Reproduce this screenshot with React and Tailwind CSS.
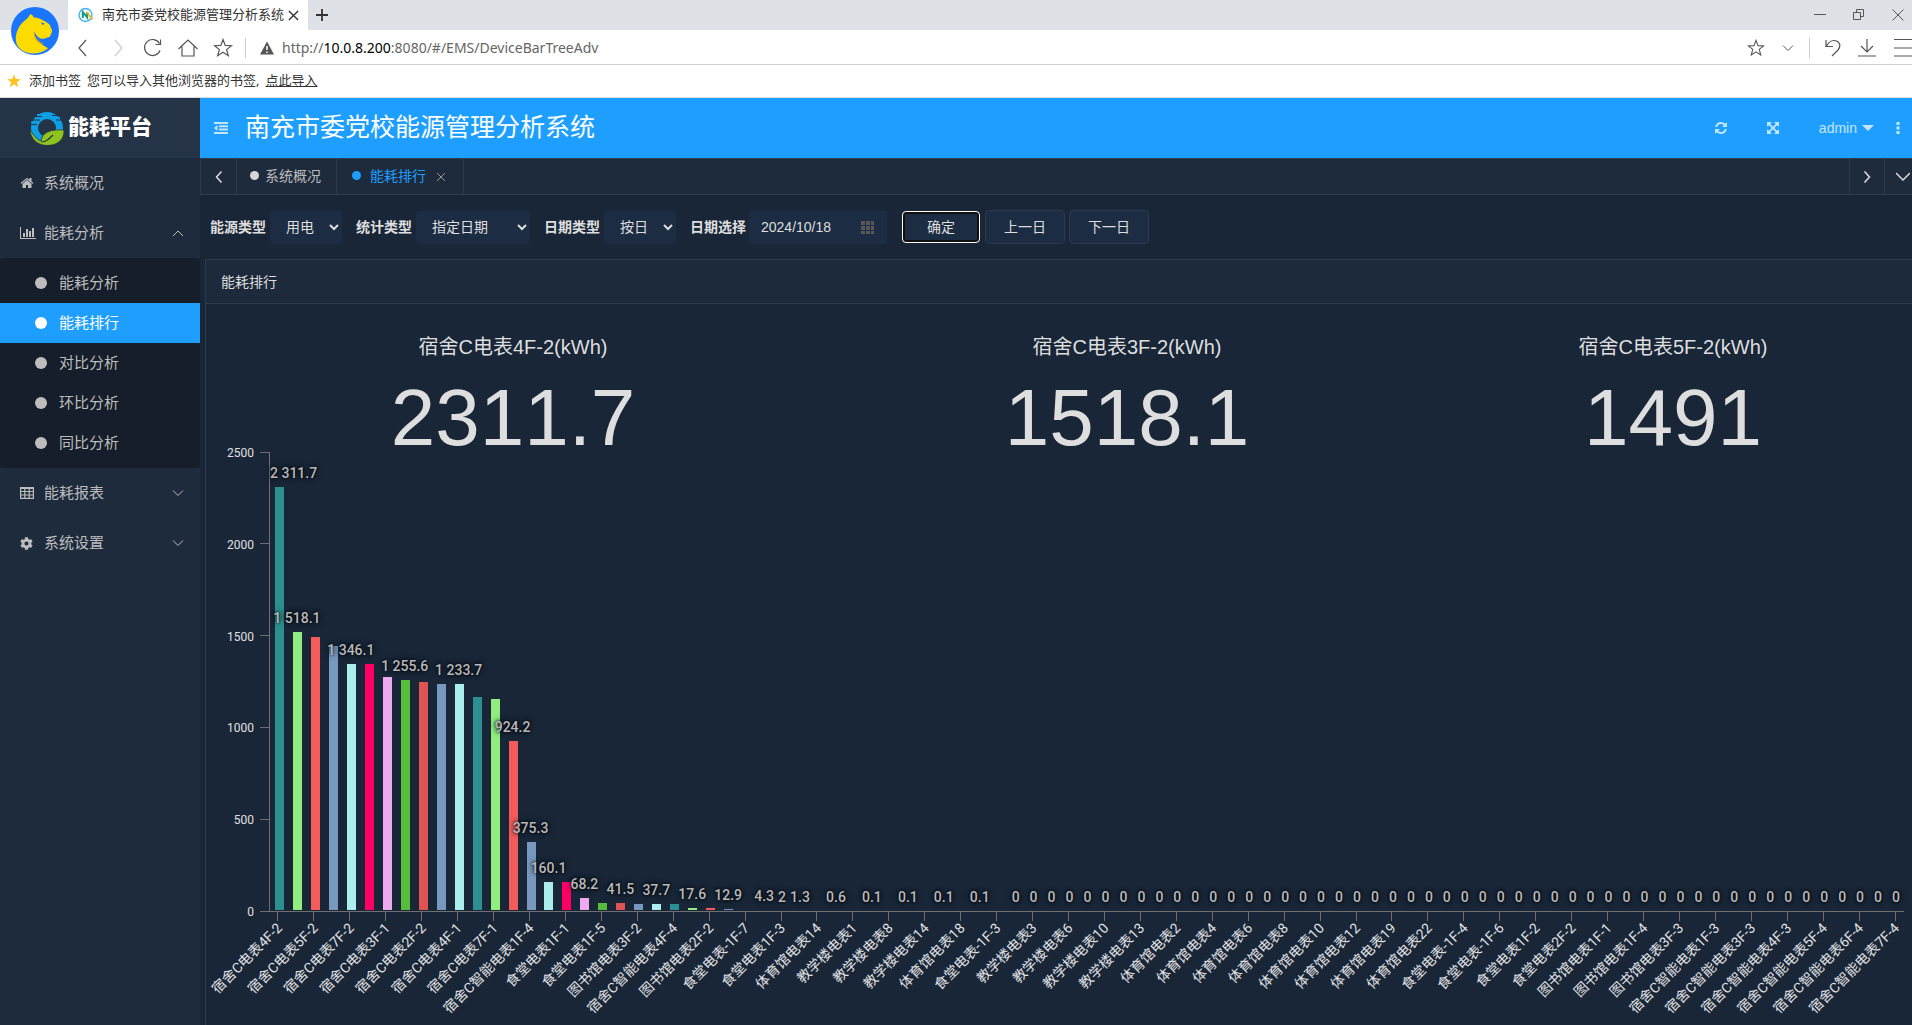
import { useState } from 'react'
import { FaCog } from 'react-icons/fa'

const COLORS = ['#2b908f', '#90ee7e', '#f45b5b', '#7798bf', '#aaeeee', '#ff0066', '#eeaaee', '#55bf3b', '#df5353', '#7798bf', '#aaeeee']

const VALUES = [
  2311.7, 1518.1, 1491, 1446, 1346.1, 1343, 1272, 1255.6, 1245, 1235, 1233.7, 1168, 1157, 924.2, 375.3, 160.1, 158, 68.2,
  42, 41.5, 40, 37.7, 36, 17.6, 15, 12.9, 5, 4.3, 2, 1.3, 1, 0.6, 0.1, 0.1, 0.1, 0.1, 0.1, 0.1, 0.1, 0.1, 0,
]
while (VALUES.length < 91) VALUES.push(0)

const LABELLED = [0, 1, 4, 7, 10, 13, 14, 15, 17, 19, 21, 23, 25, 27, 28, 29, 31, 33, 35, 37, 39]

const METERS = [
  '宿舍C电表4F-2', '宿舍C电表5F-2', '宿舍C电表7F-2', '宿舍C电表3F-1', '宿舍C电表2F-2', '宿舍C电表4F-1', '宿舍C电表7F-1',
  '宿舍C智能电表1F-4', '食堂电表1F-1', '食堂电表1F-5', '图书馆电表3F-2', '宿舍C智能电表4F-4', '图书馆电表2F-2', '食堂电表-1F-7',
  '食堂电表1F-3', '体育馆电表14', '教学楼电表1', '教学楼电表8', '教学楼电表14', '体育馆电表18', '食堂电表-1F-3', '教学楼电表3',
  '教学楼电表6', '教学楼电表10', '教学楼电表13', '体育馆电表2', '体育馆电表4', '体育馆电表6', '体育馆电表8', '体育馆电表10',
  '体育馆电表12', '体育馆电表19', '体育馆电表22', '食堂电表-1F-4', '食堂电表-1F-6', '食堂电表1F-2', '食堂电表2F-2',
  '图书馆电表1F-1', '图书馆电表1F-4', '图书馆电表3F-3', '宿舍C智能电表1F-3', '宿舍C智能电表3F-3', '宿舍C智能电表4F-3',
  '宿舍C智能电表5F-4', '宿舍C智能电表6F-4', '宿舍C智能电表7F-4',
]

const TOP_METERS = [
  { name: '宿舍C电表4F-2(kWh)', value: '2311.7' },
  { name: '宿舍C电表3F-2(kWh)', value: '1518.1' },
  { name: '宿舍C电表5F-2(kWh)', value: '1491' },
]

const ICONS = {
  home: 'M1472 992v480q0 26-19 45t-45 19h-384v-384h-256v384h-384q-26 0-45-19t-19-45v-480q0-1 .5-3t.5-3l575-474 575 474q1 2 1 6zm223-69l-62 74q-8 9-21 11h-3q-13 0-21-7l-692-577-692 577q-12 8-24 7-13-2-21-11l-62-74q-8-10-7-23.500t11-21.500l719-599q32-26 76-26t76 26l244 204v-195q0-14 9-23t23-9h192q14 0 23 9t9 23v408l219 182q10 8 11 21.500t-7 23.500z',
  refresh: 'M1639 1056q0 5-1 7-64 268-268 434.500t-478 166.500q-146 0-282.500-55t-243.500-157l-129 129q-19 19-45 19t-45-19-19-45v-448q0-26 19-45t45-19h448q26 0 45 19t19 45-19 45l-137 137q71 66 161 102t187 36q134 0 250-65t186-179q11-17 53-117 8-23 30-23h192q13 0 22.500 9.500t9.500 22.500zm25-800v448q0 26-19 45t-45 19h-448q-26 0-45-19t-19-45 19-45l138-138q-148-137-349-137-134 0-250 65t-186 179q-11 17-53 117-8 23-30 23h-199q-13 0-22.500-9.500t-9.500-22.500v-7q65-268 270-434.500t480-166.500q146 0 284 55.500t245 156.500l130-129q19-19 45-19t45 19 19 45z',
  expand: 'M1411 541l-355 355 355 355 144-144q29-31 70-14 39 17 39 59v448q0 26-19 45t-45 19h-448q-42 0-59-40-17-39 14-69l144-144-355-355-355 355 144 144q31 30 14 69-17 40-59 40h-448q-26 0-45-19t-19-45v-448q0-42 40-59 39-17 69 14l144 144 355-355-355-355-144 144q-19 19-45 19-12 0-24-5-40-17-40-59v-448q0-26 19-45t45-19h448q42 0 59 40 17 39-14 69l-144 144 355 355 355-355-144-144q-31-30-14-69 17-40 59-40h448q26 0 45 19t19 45v448q0 42-39 59-13 5-25 5-26 0-45-19z',
}

function Solid({ name, className }) {
  return <svg viewBox="0 0 1792 1792" className={className} fill="currentColor"><path d={ICONS[name]} /></svg>
}

function Line({ d, className, box = 20, width = 1.2 }) {
  return (
    <svg viewBox={`0 0 ${box} ${box}`} className={className} fill="none" stroke="currentColor" strokeWidth={width}>
      <path d={d} />
    </svg>
  )
}

const STAR = 'M10 1.500l2.200 5.900 6.300.3-4.900 3.900 1.700 6.100L10 14.200l-5.300 3.500 1.700-6.100L1.500 7.700l6.300-.3z'

function BrowserChrome() {
  return (
    <div className="relative font-['Noto_Sans','Noto_Sans_CJK_SC',sans-serif] text-[#333]">
      <svg viewBox="0 0 48 48" className="absolute left-[11px] top-[7px] z-10 h-12 w-12">
        <circle cx="24" cy="24" r="24" fill="#1a75ff" />
        <path fill="#ffdc00" d="M19.500 7c2 .8 2.600 2 3.400 3.600 4 .2 6.500 1.200 9.800 3.200 2.600 1.400 4.800 2.700 6.400 4.500-.2 1.400 1.700 3.400 1.900 5.200.2 1.800-.8 2.700-1.200 4.200-.5 1.800-1.800 2.900-3.900 2.700-1.300 1-3.600 1.800-5.800 1.300-3-.7-5.200-3.800-7.200-7.400.5 5.500 3 9.500 6.500 12.200 2.600 1.800 5.200 3.400 7.700 4.700C32 45.500 24 47.500 17.500 46 10 44 6 40 5 34c-.7-6 .8-10 4-15.500 2.600-3.700 6-5.500 8.200-8 .6-1.300 1.500-2.200 2.300-3.500z" />
        <path fill="#1a75ff" d="M29.500 15.500l4 .8-1.400 2z" />
        <path fill="#e5a900" d="M22.900 24.300c-.8 5 1 9.300 5.100 11.600 1.500.9 3.500 1 5 .8-5-1.200-9-5.400-10.100-12.400z" />
      </svg>
      <div className="flex h-[30px] items-center bg-[#dee1e6] pl-[68px]">
        <div className="flex h-full w-60 items-center bg-white pl-[10px] pr-[9px]">
          <svg viewBox="0 0 16 16" className="mr-2 h-4 w-4 shrink-0">
            <circle cx="7.500" cy="8" r="6.500" fill="none" stroke="#3fb4f0" strokeWidth="1.400" />
            <path d="M4.800 11V5l4.400 5.500V5" fill="none" stroke="#0c9b86" strokeWidth="2" />
            <path d="M9 5l5.500 7.500" stroke="#f5b921" strokeWidth="2" />
          </svg>
          <span className="flex-1 whitespace-nowrap text-[13px]">南充市委党校能源管理分析系统</span>
          <button aria-label="关闭标签页"><Line d="M1 1l10 10M11 1L1 11" box={12} width={1.5} className="h-[11px] w-[11px]" /></button>
        </div>
        <button aria-label="新标签页" className="ml-2"><Line d="M6 0v12M0 6h12" box={12} width={1.8} className="h-3 w-3" /></button>
        <div className="ml-auto flex items-center gap-[27px] pr-2 text-[#555]">
          <button aria-label="最小化"><Line d="M0 5.500h12" box={12} width={1} className="h-3 w-3" /></button>
          <button aria-label="还原"><Line d="M.500 3.500h7v7h-7zM3.500 3V.500h7v7H8" box={12} width={1} className="h-3 w-3" /></button>
          <button aria-label="关闭"><Line d="M.500.500l11 11M11.500.500l-11 11" box={12} width={1} className="h-3 w-3" /></button>
        </div>
      </div>
      <div className="flex h-[35px] items-center overflow-hidden border-b border-[#d0d0d0] bg-white pl-[73px] pt-px text-[#555]">
        <div className="flex items-center gap-[15px]">
          <button aria-label="后退"><Line d="M13 2L6 10l7 8" className="h-5 w-5" /></button>
          <button aria-label="前进" className="text-[#ccc]"><Line d="M7 2l7 8-7 8" className="h-5 w-5" /></button>
          <button aria-label="刷新"><Line d="M17 12.500A8 8 0 1 1 16.500 5.500M17.500 1.500v5h-5" className="h-5 w-5" /></button>
          <button aria-label="主页"><Line d="M.500 11L10 2l9.500 9M4 8.500V18h12V8.500" className="h-5 w-5" /></button>
          <button aria-label="收藏"><Line d={STAR} className="h-5 w-5" /></button>
        </div>
        <div className="ml-3 h-5 w-px bg-[#ccc]" />
        <svg viewBox="0 0 14 14" className="ml-[14px] h-[14px] w-[14px]">
          <path d="M7 .500L14 13.500H0z" fill="#555" />
          <path d="M7 5v4M7 10.500v1.500" stroke="#fff" strokeWidth="1.500" />
        </svg>
        <span className="ml-2 text-sm text-[#666]">http://<span className="text-black">10.0.8.200</span>:8080/#/EMS/DeviceBarTreeAdv</span>
        <div className="ml-auto flex items-center">
          <button aria-label="加入书签"><Line d={STAR} className="h-[18px] w-[18px]" /></button>
          <button aria-label="书签列表" className="ml-[17px]"><Line d="M1 3.500l5 5 5-5" box={12} width={1} className="h-3 w-3" /></button>
          <div className="ml-[15px] h-5 w-px bg-[#ccc]" />
          <button aria-label="撤销" className="ml-[14px]"><Line d="M2 2v6.500h7M2.500 8C5 3.500 9 1.500 12.500 3c4.500 2 4 6 1.500 9l-6 6" className="h-5 w-5" /></button>
          <button aria-label="下载" className="ml-[13px]"><Line d="M10 1v13M4 8l6 6 6-6M1 18h18" className="h-5 w-5" /></button>
          <button aria-label="菜单" className="-mr-[2px] ml-[17px]"><Line d="M0 1.500h20M0 10h20M0 18h20" className="h-5 w-5" /></button>
        </div>
      </div>
      <div className="flex h-[33px] items-center border-b border-[#d8dadd] bg-white pl-[6px] text-[13px]">
        <svg viewBox="0 0 20 20" className="mr-[7px] h-4 w-4"><path d={STAR} fill="#ffc21f" /></svg>
        <span>添加书签</span>
        <span className="ml-[6px]">您可以导入其他浏览器的书签,</span>
        <a href="#import" className="ml-[6px] underline">点此导入</a>
      </div>
    </div>
  )
}

function Logo() {
  return (
    <div className="flex h-15 items-center bg-[#243346] pl-[30px]">
      <svg viewBox="0 0 34 34" className="h-[34px] w-[34px]">
        <circle cx="17" cy="17" r="12.500" fill="none" stroke="#0d9fe3" strokeWidth="7" />
        <path fill="none" stroke="#243346" strokeWidth="1" d="M4 5.500h8M22 4.500h7M2 9h8M26 9h6M0 13.500h7" />
        <path fill="#0d9fe3" d="M7 3h4v2H7zM1 10.500h6v2H1zM25 6h5v2h-5z" />
        <path fill="#8fc31f" stroke="#243346" strokeWidth=".800" d="M0 18c3 6 6 10 11 12 1-8 8-12 23-11 .500 9-6 15.500-17 15.500C8 34.500 0 28 0 18z" />
        <path fill="none" stroke="#243346" strokeWidth="1.200" d="M11 31c5 0 8-3 12-7" />
      </svg>
      <span className="whitespace-nowrap pl-1 font-['Liberation_Serif','Noto_Sans_CJK_SC',serif] text-[21px] font-black text-white">能耗平台</span>
    </div>
  )
}

function NavItem({ icon, open, leaf, children }) {
  return (
    <button className="flex h-[50px] w-full items-center pl-5 pr-4 text-left text-[15px]">
      <span className="w-6">{icon}</span>
      <span className="flex-1">{children}</span>
      {!leaf && <Line d={open ? 'M1 9l5-5 5 5' : 'M1 3.500l5 5 5-5'} box={12} width={1} className="h-3 w-3" />}
    </button>
  )
}

function Sidebar() {
  const [active, setActive] = useState('能耗排行')
  return (
    <aside className="w-[200px] shrink-0 bg-[#1d2b3d] text-[#bdbdbd]">
      <Logo />
      <nav>
        <NavItem leaf icon={<Solid name="home" className="h-[14px] w-[14px]" />}>系统概况</NavItem>
        <NavItem
          open
          icon={
            <svg viewBox="0 0 2048 1792" className="h-[14px] w-4" fill="currentColor">
              <path d="M640 896v512h-256v-512h256zm384-512v1024h-256v-1024h256zm1024 1152v128h-2048v-1536h128v1408h1920zm-640-896v768h-256v-768h256zm384-384v1152h-256v-1152h256z" />
            </svg>
          }
        >
          能耗分析
        </NavItem>
        <div className="rounded bg-[#151e2a] py-[5px]">
          {['能耗分析', '能耗排行', '对比分析', '环比分析', '同比分析'].map(name => (
            <button
              key={name}
              onClick={() => setActive(name)}
              className={`flex h-10 w-full items-center gap-3 pl-[35px] text-[15px] ${name === active ? 'bg-[#1e9fff] text-white' : ''}`}
            >
              <span className="h-3 w-3 rounded-full bg-current" />
              {name}
            </button>
          ))}
        </div>
        <NavItem icon={<Line d="M.600 1.600h12.800v10.800H.600zM.600 2.500h12.800M.600 5.500h12.800M.600 9h12.800M4.800 2v10M9.200 2v10" box={14} className="h-[14px] w-[14px]" />}>能耗报表</NavItem>
        <NavItem icon={<FaCog className="h-[13px] w-[13px]" />}>系统设置</NavItem>
      </nav>
    </aside>
  )
}

function Header() {
  return (
    <header className="flex h-15 items-center bg-[#1e9fff] text-[#c4e5ff]">
      <button aria-label="收起菜单" className="ml-[14px]">
        <svg viewBox="0 0 14 12" className="h-3 w-[14px]" fill="currentColor">
          <path d="M0 0h14v2H0zM5 3.300h9v2H5zM5 6.600h9v2H5zM0 10h14v2H0zM0 6l3.500-3v6z" />
        </svg>
      </button>
      <h1 className="ml-[17px] text-[25px] text-white">南充市委党校能源管理分析系统</h1>
      <div className="ml-auto flex items-center pr-3">
        <button aria-label="刷新页面"><Solid name="refresh" className="h-[14px] w-[14px]" /></button>
        <button aria-label="全屏" className="ml-[38px]"><Solid name="expand" className="h-[14px] w-[14px]" /></button>
        <button className="ml-[39px] flex items-center gap-[5px] text-sm">
          admin
          <svg viewBox="0 0 12 6" className="h-[6px] w-3" fill="currentColor"><path d="M0 0h12L6 6z" /></svg>
        </button>
        <button aria-label="更多" className="ml-[22px]">
          <svg viewBox="0 0 4 12" className="h-3 w-1" fill="currentColor"><path d="M.500 0h3v3h-3zM.500 4.500h3v3h-3zM.500 9h3v3h-3z" /></svg>
        </button>
      </div>
    </header>
  )
}

function TabBar() {
  return (
    <div className="flex h-[37px] items-stretch border-y border-l border-[#2f3e4e] bg-[#1d2b3d] text-sm text-[#bdbdbd]">
      <button aria-label="向左" className="flex w-9 items-center justify-center border-r border-[#2f3e4e] text-[#ddd]">
        <Line d="M8.500.500L3.500 6l5 5.500" box={12} width={1.5} className="h-3 w-3" />
      </button>
      <button className="flex items-center gap-[6px] border-r border-[#2f3e4e] pb-[2px] pl-[13px] pr-[15px]">
        <span className="h-[9px] w-[9px] rounded-full bg-[#d5d5d5]" />
        系统概况
      </button>
      <button className="flex items-center border-r border-[#2f3e4e] pb-[2px] pl-[15px] pr-4 text-[#1e9fff]">
        <span className="mr-[9px] h-[9px] w-[9px] rounded-full bg-current" />
        能耗排行
        <Line d="M2 2l8 8M10 2l-8 8" box={12} width={1} className="ml-[9px] mt-[2px] h-3 w-3 text-[#999]" />
      </button>
      <button aria-label="向右" className="ml-auto flex w-9 items-center justify-center border-x border-[#2f3e4e] text-[#ddd]">
        <Line d="M3.500.500l5 5.500-5 5.500" box={12} width={1.5} className="h-3 w-3" />
      </button>
      <button aria-label="标签操作" className="flex w-[27px] items-center justify-end pr-[2px] text-[#ddd]">
        <Line d="M0 3l7 7 7-7" box={14} width={1.5} className="h-[14px] w-[14px]" />
      </button>
    </div>
  )
}

function Field({ id, label, options, className }) {
  return (
    <div className="flex items-center">
      <label htmlFor={id} className="mr-1 font-bold">{label}</label>
      <select id={id} className={`h-[33px] rounded bg-[#1c2d43] pl-3 ${className}`}>
        {options.map(o => <option key={o}>{o}</option>)}
      </select>
    </div>
  )
}

function Filters() {
  const [date, setDate] = useState('2024/10/18')
  return (
    <form onSubmit={e => e.preventDefault()} className="flex h-16 items-center pl-[10px] text-sm">
      <div className="flex items-center gap-[14px]">
        <Field id="energy" label="能源类型" options={['用电', '用水']} className="w-[72px]" />
        <Field id="stat" label="统计类型" options={['指定日期', '日期范围']} className="w-[114px]" />
        <Field id="unit" label="日期类型" options={['按日', '按月', '按年']} className="w-[72px]" />
      </div>
      <label htmlFor="date" className="ml-[14px] mr-[3px] font-bold">日期选择</label>
      <input id="date" value={date} onChange={e => setDate(e.target.value)} className="h-[33px] w-[98px] rounded-l bg-[#1c2d43] pl-3" />
      <button type="button" aria-label="打开日历" className="flex h-[33px] w-10 items-center justify-center bg-[#1c2d43] text-[#575757]">
        <svg viewBox="0 0 13 13" className="h-[13px] w-[13px]" fill="currentColor">
          <path d="M0 0h4v4H0zM5 0h4v4H5zM10 0h3v4h-3zM0 5h4v4H0zM5 5h4v4H5zM10 5h3v4h-3zM0 10h4v3H0zM5 10h4v3H5zM10 10h3v3h-3z" />
        </svg>
      </button>
      <button className="ml-[15px] h-8 w-[78px] rounded border border-white bg-[#1c2d43] ring-2 ring-inset ring-[#101010]">确定</button>
      <button type="button" className="ml-[5px] h-[34px] w-20 rounded border border-[#2c3b4b] bg-[#1c2d43]">上一日</button>
      <button type="button" className="ml-1 h-[34px] w-20 rounded border border-[#2c3b4b] bg-[#1c2d43]">下一日</button>
    </form>
  )
}

function BarChart() {
  const height = 459
  const max = 2500
  const y = v => height - (v / max) * height
  const x = i => `${((i + 0.5) / VALUES.length) * 100}%`
  const format = v => (v >= 1000 ? `${Math.floor(v / 1000)} ${(v % 1000).toFixed(1)}` : `${v}`)
  // the lowest pixel of a bar is hidden by the axis line
  const bar = v => Math.max(0, Math.round((v / max) * height) - 1)

  return (
    <div className="ml-[63px] mr-2 h-[573px] font-['Roboto','Noto_Sans_CJK_SC',sans-serif]">
      <svg className="h-[459px] w-full overflow-visible" role="img" aria-label="能耗排行">
        {[0, 500, 1000, 1500, 2000, 2500].map(tick => (
          <g key={tick}>
            <line x1="-9" x2="0" y1={y(tick)} y2={y(tick)} stroke="#707073" shapeRendering="crispEdges" />
            <text x="-15" y={y(tick) + 5} textAnchor="end" fill="#e0e0e3" className="text-xs">{tick}</text>
          </g>
        ))}
        {VALUES.map((v, i) => (
          <svg key={i} x={x(i)} className="overflow-visible">
            <rect x="-3" y={height - bar(v) - 1} width="9" height={bar(v)} fill={COLORS[i % COLORS.length]} shapeRendering="crispEdges" />
          </svg>
        ))}
        <path d={`M0 0V${height}`} stroke="#707073" shapeRendering="crispEdges" />
        <line x1="0" x2="100%" y1={height} y2={height} stroke="#707073" shapeRendering="crispEdges" />
        {METERS.map((name, i) => (
          <svg key={name} x={x(i * 2)} y={height} className="overflow-visible">
            <line x1="0" x2="0" y1="0" y2="10" stroke="#707073" shapeRendering="crispEdges" />
            <text transform="translate(5 18) rotate(-45)" textAnchor="end" fill="#e0e0e3" className="text-[14px]">{name}</text>
          </svg>
        ))}
        {VALUES.map((v, i) => (LABELLED.includes(i) || i > 40) && (
          <text
            key={i}
            x={i === 0 ? 1 : x(i)}
            dx={i === 0 ? 0 : 1}
            y={y(v) - 9}
            textAnchor={i === 0 ? 'start' : 'middle'}
            fill="#b8b8bb"
            className="text-[14px] font-medium [text-shadow:0_0_3px_#000,0_0_6px_#000]"
          >
            {format(v)}
          </text>
        ))}
      </svg>
    </div>
  )
}

export default function App() {
  return (
    <div className="flex h-screen flex-col overflow-hidden bg-[#182638] font-['Liberation_Sans','Noto_Sans_CJK_SC',sans-serif]">
      <BrowserChrome />
      <div className="flex min-h-0 flex-1">
        <Sidebar />
        <main className="min-w-0 flex-1 text-[#dedede]">
          <Header />
          <TabBar />
          <Filters />
          <section className="ml-[5px] border-l border-t border-[#2c3b4b]">
            <h2 className="flex h-11 items-center border-b border-[#2c3b4b] bg-[#1c2a3b] pl-[15px] text-sm">能耗排行</h2>
            <div className="grid grid-cols-[614fr_614fr_478fr] pt-7 text-center">
              {TOP_METERS.map(m => (
                <div key={m.name}>
                  <div className="text-xl leading-[30px]">{m.name}</div>
                  <div className="mt-[22px] text-[80px] leading-[68px] [font-kerning:none]">{m.value}</div>
                </div>
              ))}
            </div>
            <BarChart />
          </section>
        </main>
      </div>
    </div>
  )
}
